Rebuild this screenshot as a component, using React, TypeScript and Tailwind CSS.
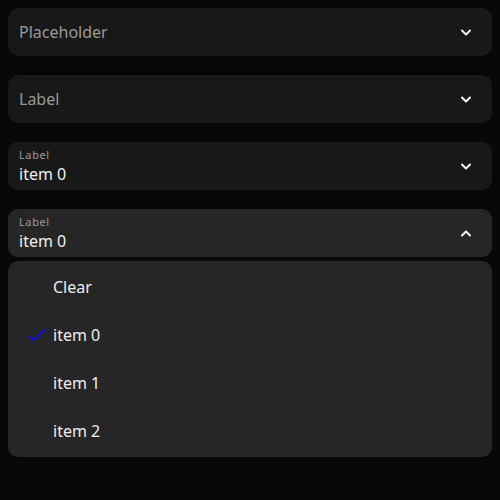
import * as React from "react";

const FONT = { fontFamily: '"Noto Sans", "DejaVu Sans", sans-serif' };

function Chevron({ up = false }: { up?: boolean }) {
  return (
    <svg width="10" height="7" viewBox="0 0 10 7" fill="none" className="shrink-0">
      <path
        d={up ? "M1 5.5 L5 1.5 L9 5.5" : "M1 1.5 L5 5.5 L9 1.5"}
        stroke="#f2f2f2"
        strokeWidth="2"
        strokeLinecap="round"
        strokeLinejoin="round"
      />
    </svg>
  );
}

function SelectField({
  label,
  value,
  placeholder,
  open = false,
}: {
  label?: string;
  value?: string;
  placeholder?: string;
  open?: boolean;
}) {
  return (
    <div
      className={
        "flex h-12 items-center rounded-[10px] pl-[11px] pr-[21px] " +
        (open ? "bg-[#262626]" : "bg-[#181818]")
      }
    >
      <div className="flex min-w-0 flex-1 flex-col justify-center">
        {value ? (
          <>
            <span className="text-[11px] leading-[13px] tracking-[0.6px] text-[#9a9a9a]">{label}</span>
            <span className="mt-[2px] text-[16px] leading-[22px] text-[#f0f0f0]">{value}</span>
          </>
        ) : (
          <span className="text-[16px] leading-[20px] text-[#9a9a9a]">{placeholder ?? label}</span>
        )}
      </div>
      <Chevron up={open} />
    </div>
  );
}

function MenuItem({ text, selected = false }: { text: string; selected?: boolean }) {
  return (
    <div className="flex h-12 items-center">
      <div className="flex w-[45px] justify-end pr-[6px]">
        {selected && (
          <svg width="20" height="16" viewBox="0 0 20 16" fill="none">
            <path d="M2 8.5 L7 13.5 L18 2.5" stroke="#1010e8" strokeWidth="1.8" />
          </svg>
        )}
      </div>
      <span className="text-[16px] leading-[20px] text-[#eeeeee]">{text}</span>
    </div>
  );
}

export default function App() {
  return (
    <div className="min-h-[500px] w-full bg-[#080808] p-2" style={FONT}>
      <div className="flex flex-col gap-[19px]">
        <SelectField placeholder="Placeholder" />
        <SelectField label="Label" />
        <SelectField label="Label" value="item 0" />
        <div className="flex flex-col gap-[4px]">
          <SelectField label="Label" value="item 0" open />
          <div className="flex flex-col rounded-[10px] bg-[#262626] py-[2px]">
            <MenuItem text="Clear" />
            <MenuItem text="item 0" selected />
            <MenuItem text="item 1" />
            <MenuItem text="item 2" />
          </div>
        </div>
      </div>
    </div>
  );
}
